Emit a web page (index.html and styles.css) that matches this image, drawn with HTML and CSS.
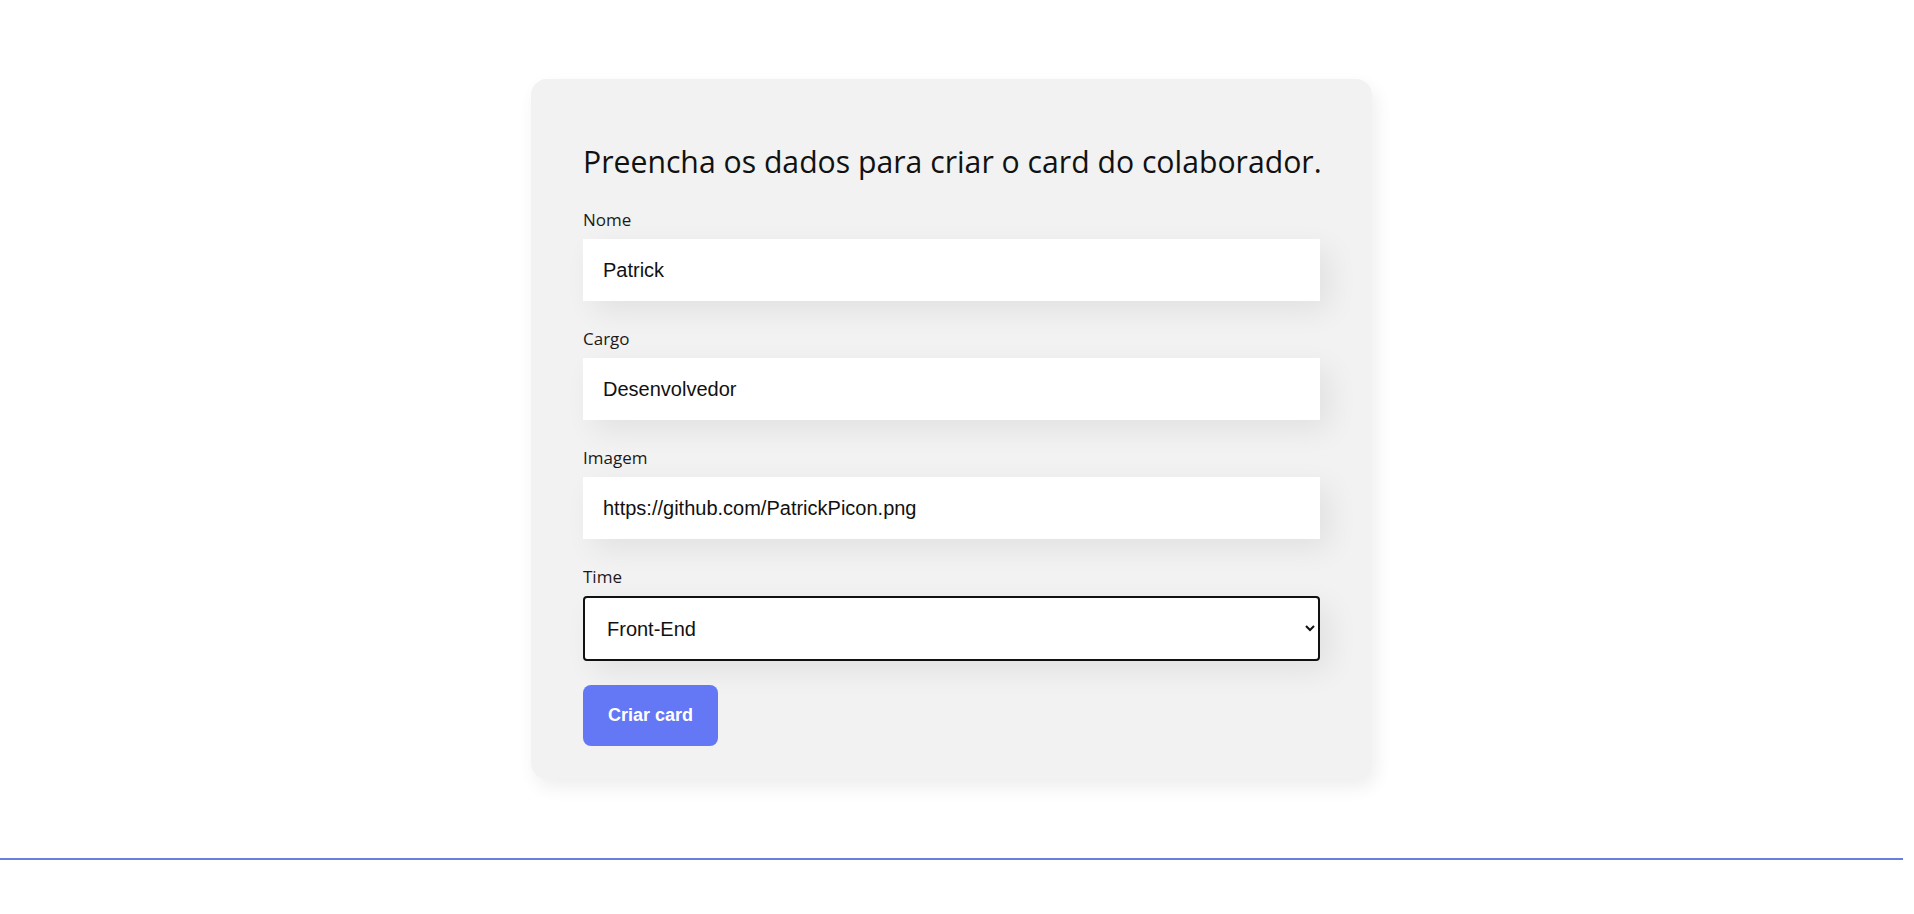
FILE: index.html
```html
<!DOCTYPE html>
<html lang="pt-BR">
<head>
<meta charset="utf-8">
<title>Organo</title>
<link rel="stylesheet" href="styles.css">
</head>
<body>
  <section class="form-section">
    <form class="card-form">
      <h2 class="card-form__title">Preencha os dados para criar o card do colaborador.</h2>
      <div class="field">
        <label class="field__label">Nome</label>
        <input class="field__input" type="text" value="Patrick">
      </div>
      <div class="field">
        <label class="field__label">Cargo</label>
        <input class="field__input" type="text" value="Desenvolvedor">
      </div>
      <div class="field">
        <label class="field__label">Imagem</label>
        <input class="field__input" type="text" value="https://github.com/PatrickPicon.png">
      </div>
      <div class="field field--select">
        <label class="field__label">Time</label>
        <select class="field__select">
          <option>Front-End</option>
          <option>Back-End</option>
          <option>Data Science</option>
        </select>
      </div>
      <button class="card-form__button" type="button">Criar card</button>
    </form>
  </section>
  <hr class="divider">
</body>
</html>
```

FILE: styles.css
```css
* {
  box-sizing: border-box;
}

html, body {
  margin: 0;
  padding: 0;
  background: #ffffff;
}

body {
  font-family: "Open Sans", "Noto Sans", sans-serif;
  color: #111;
}

.form-section {
  width: 1903px;
  display: flex;
  justify-content: center;
  padding: 79px 0;
}

.card-form {
  width: 841px;
  background: #f2f2f2;
  border-radius: 16px;
  padding: 63px 52px 33px;
  box-shadow: 4px 8px 18px rgba(0, 0, 0, 0.07);
  display: flex;
  flex-direction: column;
  align-items: flex-start;
}

.card-form__title {
  margin: 0 0 28px;
  font-size: 30.2px;
  line-height: 40px;
  font-weight: 400;
  color: #111;
  white-space: nowrap;
}

.field {
  width: 100%;
  display: flex;
  flex-direction: column;
  gap: 9px;
  margin-bottom: 28px;
}

.field--select {
  margin-bottom: 24px;
}

.field__label {
  font-size: 17px;
  line-height: 20px;
  color: #1a1a1a;
}

.field__input {
  width: 100%;
  height: 62px;
  border: none;
  outline: none;
  background: #ffffff;
  padding: 0 20px;
  font-family: "Liberation Sans", Arial, sans-serif;
  font-size: 20px;
  color: #111;
  box-shadow: 10px 10px 30px rgba(0, 0, 0, 0.07);
}

.field__select {
  width: 100%;
  height: 65px;
  border: 2px solid #111;
  border-radius: 4px;
  background: #ffffff;
  padding: 0 14px 0 18px;
  font-family: "Liberation Sans", Arial, sans-serif;
  font-size: 20px;
  color: #111;
  box-shadow: 10px 10px 30px rgba(0, 0, 0, 0.07);
}

.card-form__button {
  width: 135px;
  height: 61px;
  border: none;
  border-radius: 8px;
  background: #6478f6;
  color: #ffffff;
  font-family: "Liberation Sans", Arial, sans-serif;
  font-size: 18px;
  font-weight: 700;
  cursor: pointer;
}

.divider {
  width: 1903px;
  margin: 0;
  border: none;
  border-top: 2px solid #6a7fdd;
  height: 0;
}
```
